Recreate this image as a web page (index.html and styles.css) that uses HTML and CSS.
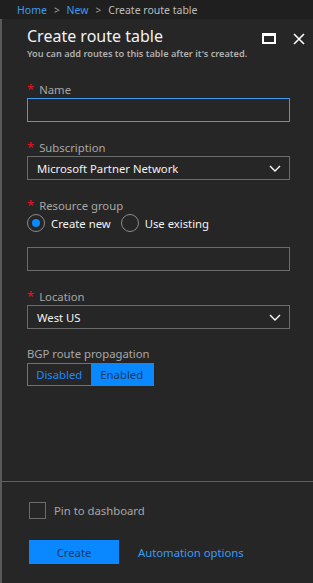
FILE: index.html
```html
<!DOCTYPE html>
<html lang="en">
<head>
    <meta charset="UTF-8">
    <meta name="viewport" content="width=device-width, initial-scale=1.0">
    <title>Create route table</title>
    <link rel="stylesheet" href="styles.css">
</head>
<body>
    <nav class="breadcrumb">
        <a href="#">Home</a>
        <span class="sep">&gt;</span>
        <a href="#">New</a>
        <span class="sep">&gt;</span>
        <span class="current">Create route table</span>
    </nav>

    <div class="blade">
        <div class="blade-header">
            <div class="titles">
                <h1>Create route table</h1>
                <p class="subtitle">You can add routes to this table after it's created.</p>
            </div>
            <div class="header-icons">
                <svg width="14" height="11" viewBox="0 0 14 11"><rect x="1" y="1" width="12" height="9" fill="none" stroke="#fff" stroke-width="2"/><rect x="1" y="1" width="12" height="2" fill="#fff"/></svg>
                <svg width="12" height="12" viewBox="0 0 12 12"><path d="M1 1 L11 11 M11 1 L1 11" stroke="#fff" stroke-width="1.6"/></svg>
            </div>
        </div>

        <div class="blade-body">
            <div class="field">
                <label class="req">Name</label>
                <input type="text" class="text-input focused">
            </div>
            <div class="field">
                <label class="req">Subscription</label>
                <div class="select">
                    <span>Microsoft Partner Network</span>
                    <svg width="12" height="7" viewBox="0 0 12 7"><path d="M1 1 L6 6 L11 1" fill="none" stroke="#fff" stroke-width="1.4"/></svg>
                </div>
            </div>
            <div class="field">
                <label class="req">Resource group</label>
                <div class="radios">
                    <span class="radio checked"><i></i>Create new</span>
                    <span class="radio"><i></i>Use existing</span>
                </div>
                <input type="text" class="text-input spaced">
            </div>
            <div class="field">
                <label class="req">Location</label>
                <div class="select">
                    <span>West US</span>
                    <svg width="12" height="7" viewBox="0 0 12 7"><path d="M1 1 L6 6 L11 1" fill="none" stroke="#fff" stroke-width="1.4"/></svg>
                </div>
            </div>
            <div class="field">
                <label>BGP route propagation</label>
                <div class="toggle">
                    <span class="off">Disabled</span>
                    <span class="on">Enabled</span>
                </div>
            </div>
        </div>

        <div class="blade-footer">
            <div class="checkbox"><i></i>Pin to dashboard</div>
            <div class="actions">
                <button class="btn-primary">Create</button>
                <a href="#" class="link">Automation options</a>
            </div>
        </div>
    </div>
</body>
</html>
```

FILE: styles.css
```css
body {
    margin: 0;
    background-color: #262626;
    font-family: "Noto Sans", "Open Sans", sans-serif;
    font-size: 11.3px;
    color: #a6a6a6;
    height: 583px;
    display: flex;
    flex-direction: column;
}
.breadcrumb {
    height: 19px;
    background-color: #1f1f1f;
    padding-left: 17px;
    display: flex;
    align-items: center;
    gap: 7px;
    font-size: 10.5px;
}
.breadcrumb a {
    color: #3c9aef;
    text-decoration: none;
}
.breadcrumb .sep {
    color: #a0a0a0;
    font-size: 10px;
}
.breadcrumb .current {
    color: #bdbdbd;
}
.blade {
    flex: 1;
    display: flex;
    flex-direction: column;
    border-left: 2px solid #5a5a5a;
}
.blade-header {
    display: flex;
    justify-content: space-between;
    padding: 5px 8px 0 25px;
}
h1 {
    margin: 0;
    font-size: 16px;
    font-weight: normal;
    color: #f2f2f2;
    line-height: 24px;
}
.subtitle {
    margin: 0;
    font-size: 9.2px;
    font-weight: 600;
    color: #b0b0b0;
    line-height: 12px;
}
.header-icons {
    display: flex;
    gap: 17px;
    padding-top: 9px;
}
.blade-body {
    flex: 1;
    padding: 21px 23px 0 25px;
}
.field {
    margin-bottom: 17px;
}
label {
    display: flex;
    align-items: baseline;
    height: 16px;
    line-height: 16px;
    margin-bottom: 1px;
}
label.req::before {
    content: "*";
    color: #e81123;
    margin-right: 5px;
    font-size: 13px;
    line-height: 16px;
}
.text-input {
    display: block;
    width: 100%;
    height: 24px;
    box-sizing: border-box;
    background: #262626;
    border: 1px solid #6b6b6b;
    margin: 0;
}
.text-input.focused {
    border-color: #3c9aef;
}
.text-input.spaced {
    margin-top: 15px;
}
.select {
    height: 24px;
    box-sizing: border-box;
    border: 1px solid #6b6b6b;
    display: flex;
    align-items: center;
    justify-content: space-between;
    padding: 0 8px 0 9px;
    color: #f2f2f2;
}
.radios {
    display: flex;
    gap: 10px;
    height: 18px;
}
.radio {
    display: flex;
    align-items: center;
    color: #f2f2f2;
}
.radio i {
    width: 16px;
    height: 16px;
    border: 1px solid #8a8a8a;
    border-radius: 50%;
    margin-right: 6px;
    display: flex;
    align-items: center;
    justify-content: center;
}
.radio.checked i::after {
    content: "";
    width: 8px;
    height: 8px;
    border-radius: 50%;
    background: #0a8aff;
}
.toggle {
    display: flex;
    width: 127px;
    height: 23px;
    box-sizing: border-box;
    border: 1px solid #0a8aff;
}
.toggle span {
    flex: 1;
    display: flex;
    align-items: center;
    justify-content: center;
}
.toggle .off {
    color: #1e86ff;
}
.toggle .on {
    background: #0a88ff;
    color: #1a3a5c;
}
.blade-footer {
    border-top: 1px solid #5f5f5f;
    padding: 20px 25px 19px 27px;
}
.checkbox {
    display: flex;
    align-items: center;
}
.checkbox i {
    width: 15px;
    height: 15px;
    border: 1px solid #6b6b6b;
    margin-right: 8px;
}
.actions {
    display: flex;
    align-items: center;
    gap: 19px;
    margin-top: 21px;
}
.btn-primary {
    width: 90px;
    height: 24px;
    border: none;
    background: #0a88ff;
    color: #1a3a5c;
    font-family: inherit;
    font-size: 11.3px;
}
.link {
    color: #3c9aef;
    text-decoration: none;
}
```
